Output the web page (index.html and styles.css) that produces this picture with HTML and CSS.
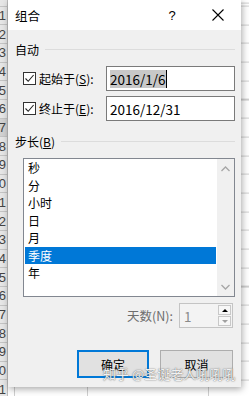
FILE: index.html
```html
<!DOCTYPE html>
<html>

<head>
    <title>组合</title>
    <link rel="stylesheet" href="styles.css">
</head>

<body>
    <div class="sheet">
        <div class="row-heads">
            <div class="rh">1</div>
            <div class="rh">2</div>
            <div class="rh">3</div>
            <div class="rh">4</div>
            <div class="rh">5</div>
            <div class="rh">6</div>
            <div class="rh on">7</div>
            <div class="rh">8</div>
            <div class="rh">9</div>
            <div class="rh">10</div>
            <div class="rh">11</div>
            <div class="rh">12</div>
            <div class="rh">13</div>
            <div class="rh">14</div>
            <div class="rh">15</div>
            <div class="rh">16</div>
            <div class="rh">17</div>
            <div class="rh">18</div>
            <div class="rh">19</div>
            <div class="rh">20</div>
            <div class="rh">21</div>
        </div>
        <div class="cells"></div>

        <div class="dialog">
            <div class="titlebar">
                <span class="title">组合</span>
                <span class="tb-btn help">?</span>
                <span class="tb-btn close">
                    <svg width="12" height="12" viewBox="0 0 12 12"><path d="M0.5 0.5 L11.5 11.5 M11.5 0.5 L0.5 11.5" stroke="#000" stroke-width="1.1" fill="none"/></svg>
                </span>
            </div>

            <div class="group-title"><span>自动</span><i class="rule"></i></div>

            <div class="check-row">
                <span class="check"><svg width="11" height="11" viewBox="0 0 11 11"><path d="M1.5 5.5 L4.2 8.3 L9.6 2" stroke="#222" stroke-width="1.1" fill="none"/></svg></span>
                <span class="check-label">起始于(<u>S</u>):</span>
                <div class="field"><span class="sel">2016/1/6</span></div>
            </div>
            <div class="check-row second">
                <span class="check"><svg width="11" height="11" viewBox="0 0 11 11"><path d="M1.5 5.5 L4.2 8.3 L9.6 2" stroke="#222" stroke-width="1.1" fill="none"/></svg></span>
                <span class="check-label">终止于(<u>E</u>):</span>
                <div class="field">2016/12/31</div>
            </div>

            <div class="group-title step"><span>步长(<u>B</u>)</span><i class="rule"></i></div>

            <div class="listbox">
                <div class="items">
                    <div class="item">秒</div>
                    <div class="item">分</div>
                    <div class="item">小时</div>
                    <div class="item">日</div>
                    <div class="item">月</div>
                    <div class="item active">季度</div>
                    <div class="item">年</div>
                </div>
                <div class="scrollbar">
                    <svg width="9" height="6" viewBox="0 0 9 6"><path d="M0.5 5 L4.5 1 L8.5 5" stroke="#a6a6a6" stroke-width="1.3" fill="none"/></svg>
                    <svg width="9" height="6" viewBox="0 0 9 6"><path d="M0.5 1 L4.5 5 L8.5 1" stroke="#a6a6a6" stroke-width="1.3" fill="none"/></svg>
                </div>
            </div>

            <div class="days-row">
                <span class="days-label">天数(N):</span>
                <div class="spin">
                    <span class="spin-val">1</span>
                    <div class="spin-btns">
                        <span class="spin-btn up"></span>
                        <span class="spin-btn down"></span>
                    </div>
                </div>
            </div>

            <div class="actions">
                <span class="btn default">确定</span>
                <span class="btn">取消</span>
            </div>
        </div>

        <div class="watermark">知乎 @圣诞老人吼吼吼</div>
    </div>
</body>

</html>
```

FILE: styles.css
```css
:root {
    --dialog-bg: #f0f0f0;
    --accent: #0078d7;
    --grid-line: #d0d0d0;
    --row-h: 18.7px;
}

body {
    margin: 0;
    font-family: "Noto Sans CJK SC", "Noto Sans", sans-serif;
    font-size: 12px;
    color: #000;
}

.sheet {
    position: relative;
    width: 249px;
    height: 396px;
    overflow: hidden;
    display: grid;
    grid-template-columns: 8px 1fr;
}

.row-heads {
    background: #e6e6e6;
    border-right: 1px solid #bdbdbd;
    padding-top: 5.6px;
    overflow: hidden;
}

.rh {
    height: var(--row-h);
    box-sizing: border-box;
    border-top: 1px solid #c4c4c4;
    display: flex;
    justify-content: flex-end;
    align-items: center;
    padding-right: 1px;
    font-family: "Liberation Sans", sans-serif;
    font-size: 13px;
    color: #444;
}

.rh.on {
    background: #d2d2d2;
}

.cells {
    background-color: #fff;
    background-image:
        linear-gradient(var(--grid-line), var(--grid-line)),
        linear-gradient(var(--grid-line), var(--grid-line)),
        linear-gradient(var(--grid-line), var(--grid-line)),
        repeating-linear-gradient(to bottom, var(--grid-line) 0 1px, transparent 1px var(--row-h));
    background-size: 1px 100%, 1px 100%, 1px 100%, 100% 100%;
    background-position: 6px 0, 79px 0, 200px 0, 0 5.6px;
    background-repeat: no-repeat, no-repeat, no-repeat, repeat;
}

/* the dialog window floats over the spreadsheet */
.dialog {
    position: absolute;
    left: 8px;
    top: 0;
    width: 233px;
    height: 387px;
    background: var(--dialog-bg);
    box-shadow: 1px 2px 7px rgba(0, 0, 0, 0.35);
}

.titlebar {
    height: 30px;
    background: #fff;
    display: flex;
    align-items: center;
    padding-left: 7px;
}

.title {
    font-size: 12.5px;
    flex: 1;
}

.tb-btn {
    width: 46px;
    height: 30px;
    display: flex;
    align-items: center;
    justify-content: center;
}

.help {
    font-family: "Liberation Sans", sans-serif;
    font-size: 13px;
}

.group-title {
    display: flex;
    align-items: center;
    gap: 6px;
    height: 18px;
    margin-top: 10px;
    padding: 0 6px 0 7px;
}

.group-title.step {
    margin-top: 11px;
}

.rule {
    flex: 1;
    height: 1px;
    background: #dcdcdc;
}

.check-row {
    display: flex;
    align-items: center;
    height: 25px;
    margin-top: 8px;
    padding-left: 15px;
}

.check-row.second {
    margin-top: 5px;
}

.check {
    width: 13px;
    height: 13px;
    box-sizing: border-box;
    border: 1px solid #333;
    background: #fff;
    display: flex;
    align-items: center;
    justify-content: center;
}

.check-label {
    margin-left: 3px;
    width: 67px;
}

.field {
    width: 129px;
    height: 25px;
    box-sizing: border-box;
    border: 1px solid #7a7a7a;
    background: #fff;
    display: flex;
    align-items: center;
    padding-left: 3px;
    font-size: 13.5px;
}

.sel {
    background: #c8c8c8;
    border-right: 1px solid #000;
    line-height: 18px;
}

.listbox {
    display: flex;
    width: 212px;
    height: 139px;
    box-sizing: border-box;
    margin: 8px 0 0 15px;
    border: 1px solid #828790;
    background: #fff;
}

.items {
    flex: 1;
}

.item {
    height: 17.5px;
    line-height: 17.5px;
    padding-left: 3px;
    margin: 0 1px;
}

.item.active {
    background: var(--accent);
    color: #fff;
}

.scrollbar {
    width: 17px;
    background: var(--dialog-bg);
    display: flex;
    flex-direction: column;
    align-items: center;
    justify-content: space-between;
    padding: 7px 0 6px;
}

.days-row {
    display: flex;
    justify-content: flex-end;
    align-items: center;
    gap: 6px;
    margin-top: 6px;
    padding-right: 8px;
}

.days-label {
    color: #6d6d6d;
    font-size: 12.5px;
}

.spin {
    width: 54px;
    height: 25px;
    box-sizing: border-box;
    border: 1px solid #c4c4c4;
    background: #f3f3f3;
    display: flex;
    align-items: center;
}

.spin-val {
    flex: 1;
    padding-left: 4px;
    color: #8a8a8a;
    font-size: 13.5px;
}

.spin-btns {
    display: flex;
    flex-direction: column;
    gap: 1px;
    margin-right: 1px;
}

.spin-btn {
    width: 13px;
    height: 10px;
    box-sizing: border-box;
    border: 1px solid #c8c8c8;
    background: #f7f7f7;
    display: flex;
    align-items: center;
    justify-content: center;
}

.spin-btn::after {
    content: '';
    border-left: 3px solid transparent;
    border-right: 3px solid transparent;
}

.spin-btn.up::after {
    border-bottom: 3px solid #000;
}

.spin-btn.down::after {
    border-top: 3px solid #a0a0a0;
}

.actions {
    display: flex;
    justify-content: flex-end;
    gap: 11px;
    margin-top: 22px;
    padding-right: 8px;
}

.btn {
    width: 73px;
    height: 28px;
    box-sizing: border-box;
    border: 1px solid #adadad;
    background: #e1e1e1;
    display: flex;
    align-items: center;
    justify-content: center;
}

.btn.default {
    width: 72px;
    border: 2px solid var(--accent);
}

/* zhihu watermark burnt into the screenshot */
.watermark {
    position: absolute;
    left: 103px;
    top: 364px;
    font-size: 13px;
    color: rgba(255, 255, 255, 0.92);
    text-shadow: 0 0 1px rgba(80, 80, 80, 0.9), 0 0 2px rgba(120, 120, 120, 0.6);
    white-space: nowrap;
}
```
